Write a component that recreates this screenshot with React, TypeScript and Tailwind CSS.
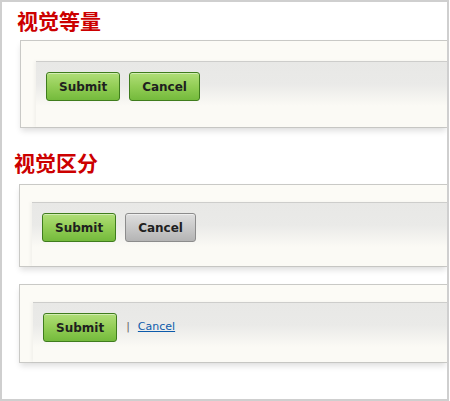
import React from "react";

const cjk = { fontFamily: '"Noto Sans CJK SC", "Noto Sans", sans-serif' };
const btnFont = { fontFamily: '"DejaVu Sans", Verdana, sans-serif' };

function GreenButton({ label }: { label: string }) {
  return (
    <button
      style={btnFont}
      className="h-[29px] px-[12px] flex items-center justify-center rounded-[3px] border border-[#3f7c1d] bg-[linear-gradient(to_bottom,#b0de78_0%,#92cd55_50%,#74ba3c_100%)] text-[12px] font-bold text-[#1f1f1f] shadow-[inset_0_1px_0_rgba(255,255,255,0.45)]"
    >
      {label}
    </button>
  );
}

function GrayButton({ label }: { label: string }) {
  return (
    <button
      style={btnFont}
      className="h-[29px] px-[12px] flex items-center justify-center rounded-[3px] border border-[#8c8c8c] bg-[linear-gradient(to_bottom,#dedede_0%,#c9c9c9_50%,#b4b4b4_100%)] text-[12px] font-bold text-[#1f1f1f] shadow-[inset_0_1px_0_rgba(255,255,255,0.5)]"
    >
      {label}
    </button>
  );
}

function Panel({
  className,
  barClass,
  children,
}: {
  className: string;
  barClass: string;
  children: React.ReactNode;
}) {
  return (
    <div
      className={`flex flex-col border-l border-t border-b border-[#c9c9c6] bg-[#fcfbf6] shadow-[0_4px_6px_-1px_rgba(0,0,0,0.13)] ${className}`}
    >
      <div
        className={`flex-1 flex items-start gap-[9px] border-t border-[#cdcdcb] bg-[linear-gradient(to_bottom,#e8e8e6_0px,#eaeae8_22px,#fbfaf5_44px)] shadow-[-2px_0_3px_rgba(0,0,0,0.04)] ${barClass}`}
      >
        {children}
      </div>
    </div>
  );
}

export default function App() {
  return (
    <div className="w-[450px] h-[401px] bg-white">
      <div className="w-[449px] h-[401px] border-2 border-[#cfcfcf] bg-white flex flex-col overflow-hidden">
        <h2 style={cjk} className="mt-[8px] ml-[15px] text-[21px] leading-[21px] font-bold text-[#cc0000]">
          视觉等量
        </h2>
        <Panel className="mt-[9px] ml-[18px] h-[88px] pl-[15px] pt-[20px]" barClass="pl-[10px] pt-[10px]">
          <GreenButton label="Submit" />
          <GreenButton label="Cancel" />
        </Panel>

        <h2 style={cjk} className="mt-[24px] ml-[12px] text-[21px] leading-[21px] font-bold text-[#cc0000]">
          视觉区分
        </h2>
        <Panel className="mt-[11px] ml-[17px] h-[83px] pl-[12px] pt-[17px]" barClass="pl-[10px] pt-[10px]">
          <GreenButton label="Submit" />
          <GrayButton label="Cancel" />
        </Panel>

        <Panel className="mt-[17px] ml-[17px] h-[79px] pl-[13px] pt-[17px]" barClass="pl-[10px] pt-[10px]">
          <div className="flex items-center">
            <GreenButton label="Submit" />
            <span style={btnFont} className="ml-[9px] text-[11px] text-[#666]">
              |
            </span>
            <a
              href="#"
              style={btnFont}
              className="ml-[8px] text-[11px] text-[#0c5bab] underline"
            >
              Cancel
            </a>
          </div>
        </Panel>
      </div>
    </div>
  );
}
